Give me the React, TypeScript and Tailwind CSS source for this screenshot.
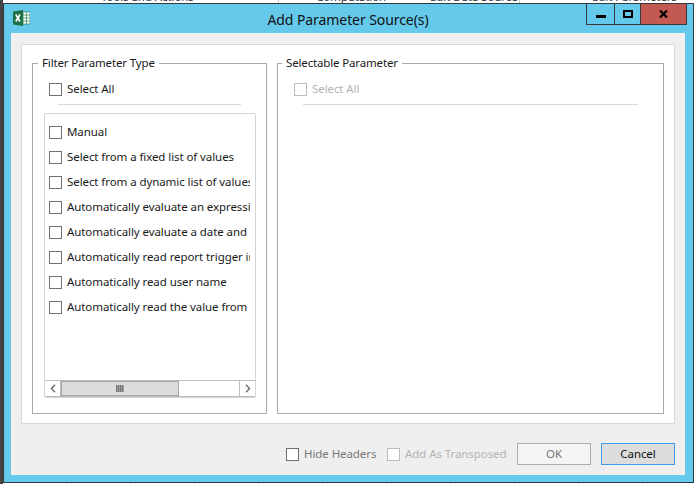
const font = { fontFamily: '"Noto Sans", sans-serif' };

const filterTypes = [
	'Manual',
	'Select from a fixed list of values',
	'Select from a dynamic list of values',
	'Automatically evaluate an expression',
	'Automatically evaluate a date and time',
	'Automatically read report trigger input',
	'Automatically read user name',
	'Automatically read the value from a cell',
];

const Check = ({ label, disabled, muted, className }: { label: string; disabled?: boolean; muted?: boolean; className?: string }) => (
	<label className={`flex items-center gap-[5px] whitespace-nowrap ${className || ''}`}>
		<span className={`h-[13px] w-[13px] shrink-0 border bg-white ${disabled ? 'border-[#bcbcbc]' : 'border-[#707070]'}`} />
		<span className={disabled ? 'text-[#b4b4b4]' : muted ? 'text-[#777]' : 'text-[#1a1a1a]'}>{label}</span>
	</label>
);

const ExcelIcon = () => (
	<svg width="17" height="16" viewBox="0 0 17 16" className="shrink-0">
		<rect x="7" y="2" width="10" height="12" fill="#fff" stroke="#1e7145" strokeWidth="0.6" />
		<path d="M10 2v12M13.5 2v12M7 5h10M7 8h10M7 11h10" stroke="#3f8f64" strokeWidth="0.8" />
		<path d="M0 1.5 10 0v16L0 14.5z" fill="#1e7145" />
		<path d="M2.8 4.5 7 11.5M7 4.5 2.8 11.5" stroke="#fff" strokeWidth="1.7" />
	</svg>
);

export default function App() {
	return (
		<div className="flex h-[484px] w-[694px] flex-col overflow-hidden bg-white text-[11.5px] leading-[16px] tracking-[-0.08px]" style={font}>
			{/* bits of the window behind */}
			<div className="flex h-[3px] shrink-0 overflow-hidden whitespace-nowrap text-[#333]">
				<div className="w-[3px] bg-[#444]" />
				<span className="ml-[98px] mt-[-11px] h-[20px] w-[178px] border-r border-[#ccc]">Tools and Actions</span>
				<span className="mt-[-11px] w-[151px] pl-[37px]">Computation</span>
				<span className="mt-[-11px] h-[20px] w-[90px] border-r border-[#ccc]">Edit Data Source</span>
				<span className="ml-[72px] mt-[-11px]">Edit Parameters</span>
			</div>

			<div className="flex min-h-0 flex-1">
				<div className="w-[3px] shrink-0 bg-[#444]" />
				<div className="flex h-[480px] w-[691px] flex-col border border-[#2f3a40] bg-[#65c9ec]">
					<div className="flex h-[29px] shrink-0 items-start">
						<div className="ml-[9px] mt-[6px]">
							<ExcelIcon />
						</div>
						<div className="w-[556px] pl-[80px] pt-[6px] text-center text-[14px] leading-[19px] text-[#111]">Add Parameter Source(s)</div>
						<div className="flex h-[21px] border-x border-b border-[#3a3a3a] leading-none">
							<div className="flex w-[28px] items-center justify-center border-r border-[#3a3a3a]">
								<span className="mt-[5px] block h-[3px] w-[10px] bg-black" />
							</div>
							<div className="flex w-[25px] items-center justify-center">
								<span className="mb-[1px] block h-[8px] w-[10px] border-2 border-black" />
							</div>
							<div className="flex w-[46px] items-center justify-center border-l border-[#3a3a3a] bg-[#c25a52]">
								<svg width="9" height="8" viewBox="0 0 9 8">
									<path d="M1 .5 8 7.5M8 .5 1 7.5" stroke="#000" strokeWidth="2.2" />
								</svg>
							</div>
						</div>
					</div>

					<div className="ml-[7px] flex h-[442px] w-[674px] flex-col bg-[#efefef] px-[10px] pt-[11px]">
						<div className="flex h-[380px] w-[654px] gap-[10px] border border-[#d9d9d9] bg-white pl-[10px] pt-[10px]">
							<fieldset className="h-[359px] w-[235px] border border-[#a9a9a9] pl-[11px]">
								<legend className="ml-[-6px] px-[4px] leading-[16px] tracking-[-0.15px] text-[#1a1a1a]">Filter Parameter Type</legend>
								<Check label="Select All" className="ml-[5px] mt-[10px]" />
								<div className="mb-[8px] ml-[14px] mt-[7px] h-px w-[183px] bg-[#d9d9d9]" />
								<div className="flex h-[285px] w-[212px] flex-col rounded-[2px] border border-[#d4d4d4]">
									<div className="ml-[4px] mr-[5px] flex min-h-0 flex-1 flex-col gap-[9px] overflow-hidden pt-[10px]">
										{filterTypes.map((t) => (
											<Check key={t} label={t} />
										))}
									</div>
									<div className="flex h-[17px] shrink-0 border-y border-[#bdbdbd] text-[#666]">
										<div className="flex w-[16px] items-center justify-center border-r border-[#bdbdbd]">
											<svg width="6" height="9" viewBox="0 0 6 9">
												<path d="M5 .8 1.4 4.5 5 8.2" fill="none" stroke="#666" strokeWidth="1.3" />
											</svg>
										</div>
										<div className="flex w-[118px] items-center justify-center border border-[#a6a6a6] bg-[#dcdcdc]">
											<span className="h-[7px] w-[8px] bg-[repeating-linear-gradient(90deg,#707070_0,#707070_1px,#a0a0a0_1px,#a0a0a0_2px)]" />
										</div>
										<div className="flex-1" />
										<div className="flex w-[16px] items-center justify-center border-l border-[#bdbdbd]">
											<svg width="6" height="9" viewBox="0 0 6 9">
												<path d="M1 .8 4.6 4.5 1 8.2" fill="none" stroke="#666" strokeWidth="1.3" />
											</svg>
										</div>
									</div>
								</div>
							</fieldset>

							<fieldset className="h-[359px] w-[387px] border border-[#a9a9a9] pl-[16px]">
								<legend className="ml-[-12px] px-[4px] leading-[16px] tracking-[-0.15px] text-[#1a1a1a]">Selectable Parameter</legend>
								<Check label="Select All" disabled className="mt-[10px]" />
								<div className="ml-[9px] mt-[7px] h-px w-[335px] bg-[#d9d9d9]" />
							</fieldset>
						</div>

						<div className="flex items-center pl-[265px] pt-[19px]">
							<Check label="Hide Headers" muted className="w-[101px] shrink-0" />
							<Check label="Add As Transposed" disabled className="w-[130px] shrink-0" />
							<button type="button" className="h-[22px] w-[74px] shrink-0 border border-[#adadad] bg-[#f4f4f4] text-[#777]">
								OK
							</button>
							<button type="button" className="ml-[10px] h-[22px] w-[74px] shrink-0 border border-[#3c9bea] bg-[#dddddd] text-[#111]">
								Cancel
							</button>
						</div>
					</div>
				</div>
			</div>

			{/* bottom edge of the sheet behind */}
			<div className="flex h-px shrink-0">
				<div className="w-[3px] bg-[#444]" />
				<div className="flex-1 bg-[repeating-linear-gradient(90deg,#fff_0,#fff_63px,#c8c8c8_63px,#c8c8c8_64px)]" />
			</div>
		</div>
	);
}
